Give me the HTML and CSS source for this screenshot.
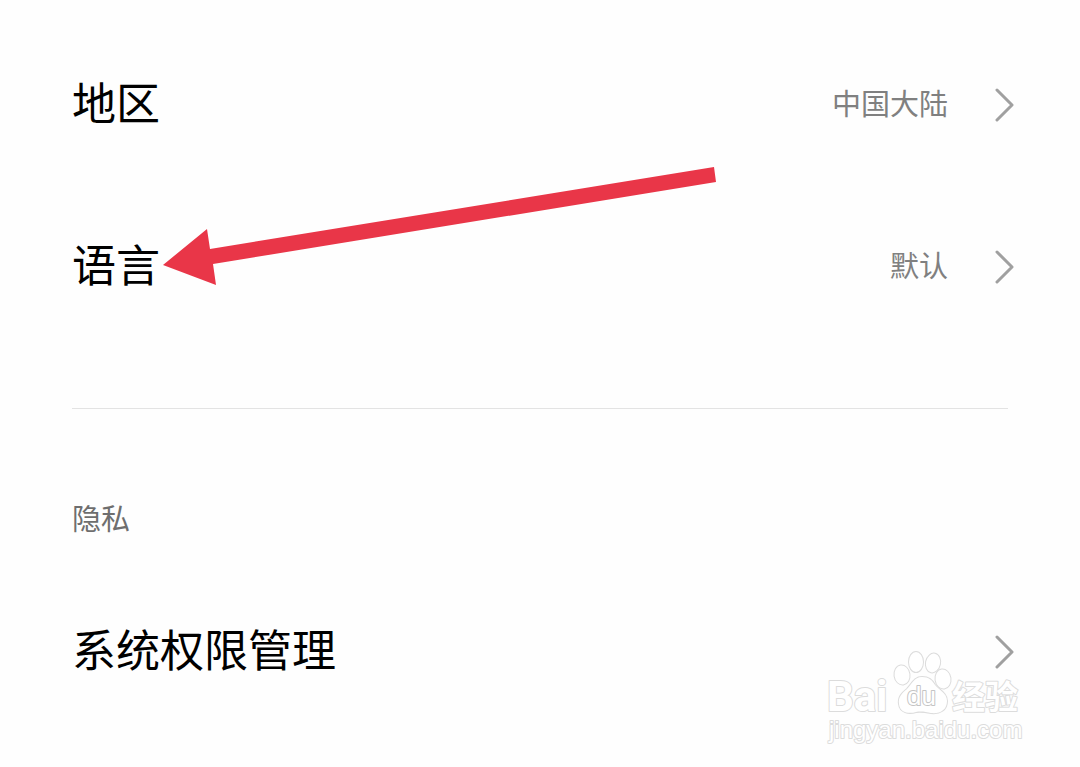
FILE: index.html
```html
<!DOCTYPE html>
<html lang="zh-CN">
<head>
    <meta charset="UTF-8">
    <meta name="viewport" content="width=device-width, initial-scale=1.0">
    <title>设置</title>
    <link rel="stylesheet" href="styles.css">
</head>
<body>
    <main class="settings">
        <button type="button" class="row">
            <span class="title">地区</span>
            <span class="value">中国大陆</span>
            <svg class="chevron" viewBox="0 0 20 36" aria-hidden="true"><path d="M3 3L18 18L3 33"/></svg>
        </button>
        <button type="button" class="row">
            <span class="title">语言</span>
            <span class="value">默认</span>
            <svg class="chevron" viewBox="0 0 20 36" aria-hidden="true"><path d="M3 3L18 18L3 33"/></svg>
        </button>

        <hr class="divider">

        <h2 class="section">隐私</h2>
        <button type="button" class="row">
            <span class="title">系统权限管理</span>
            <svg class="chevron" viewBox="0 0 20 36" aria-hidden="true"><path d="M3 3L18 18L3 33"/></svg>
        </button>
    </main>

    <!-- red arrow pointing at the language row -->
    <svg class="arrow" viewBox="0 0 556 120" aria-hidden="true">
        <path d="M3 99L47 63L50 83L554 1L556 16L53 98L56 119Z"/>
    </svg>

    <!-- watermark -->
    <svg class="watermark" viewBox="0 0 210 105">
        <text class="brand" x="7" y="66">Bai</text>
        <ellipse cx="82" cy="30" rx="7.5" ry="9.5" transform="rotate(-8 82 30)"/>
        <ellipse cx="96" cy="17" rx="7" ry="10"/>
        <ellipse cx="113" cy="18" rx="7" ry="9.5" transform="rotate(12 113 18)"/>
        <ellipse cx="123" cy="34" rx="7.5" ry="9.5" transform="rotate(-8 123 34)"/>
        <path d="M102 32C94 32 92 39 87 44C82 48 78 52 79 59C80 68 89 69 96 67C101 66 106 67 111 68C120 69 127 65 127 56C127 48 119 45 115 40C112 35 109 32 102 32Z"/>
        <text class="du" x="87" y="60">du</text>
        <text class="jingyan" x="132" y="64">经验</text>
        <text class="url" x="9" y="93">jingyan.baidu.com</text>
    </svg>
</body>
</html>
```

FILE: styles.css
```css
* {
    box-sizing: border-box;
}
body {
    position: relative;
    margin: 0;
    min-height: 100vh;
    background-color: #fefefe;
    font-family: "Liberation Sans", "Noto Sans CJK SC", sans-serif;
    color: #000;
}
.settings {
    padding: 24px 64px 34px 72px;
}
.row {
    display: flex;
    align-items: center;
    width: 100%;
    height: 162px;
    padding: 0;
    border: none;
    background: none;
    font-family: inherit;
    color: inherit;
    text-align: left;
    cursor: pointer;
}
.title {
    flex: 1;
    font-size: 44px;
    line-height: 64px;
}
.value {
    margin-right: 46px;
    font-size: 29px;
    line-height: 42px;
    color: #808080;
}
.chevron {
    width: 20px;
    height: 36px;
    margin-right: 2px;
    fill: none;
    stroke: #a0a0a0;
    stroke-width: 3;
    stroke-linecap: round;
    stroke-linejoin: round;
}
.divider {
    height: 1px;
    margin: 60px 8px 90px 0;
    border: none;
    background-color: #e3e3e3;
}
.section {
    margin: 0 0 30px;
    font-size: 29px;
    font-weight: normal;
    line-height: 42px;
    color: #6e6e6e;
}
.arrow {
    position: absolute;
    top: 166px;
    left: 160px;
    width: 556px;
    height: 120px;
    fill: #e93648;
    pointer-events: none;
}
.watermark {
    position: absolute;
    right: 50px;
    bottom: 17px;
    width: 210px;
    height: 105px;
    fill: #fff;
    stroke: #dcdcdc;
    stroke-width: 2;
    stroke-linejoin: round;
    paint-order: stroke;
    pointer-events: none;
}
.brand {
    font-family: Roboto, "Liberation Sans", sans-serif;
    font-size: 42px;
    font-weight: bold;
}
.du {
    font-size: 26px;
    stroke: #c4c4c4;
}
.jingyan {
    font-size: 33px;
    font-weight: bold;
}
.url {
    font-size: 24px;
}
```
